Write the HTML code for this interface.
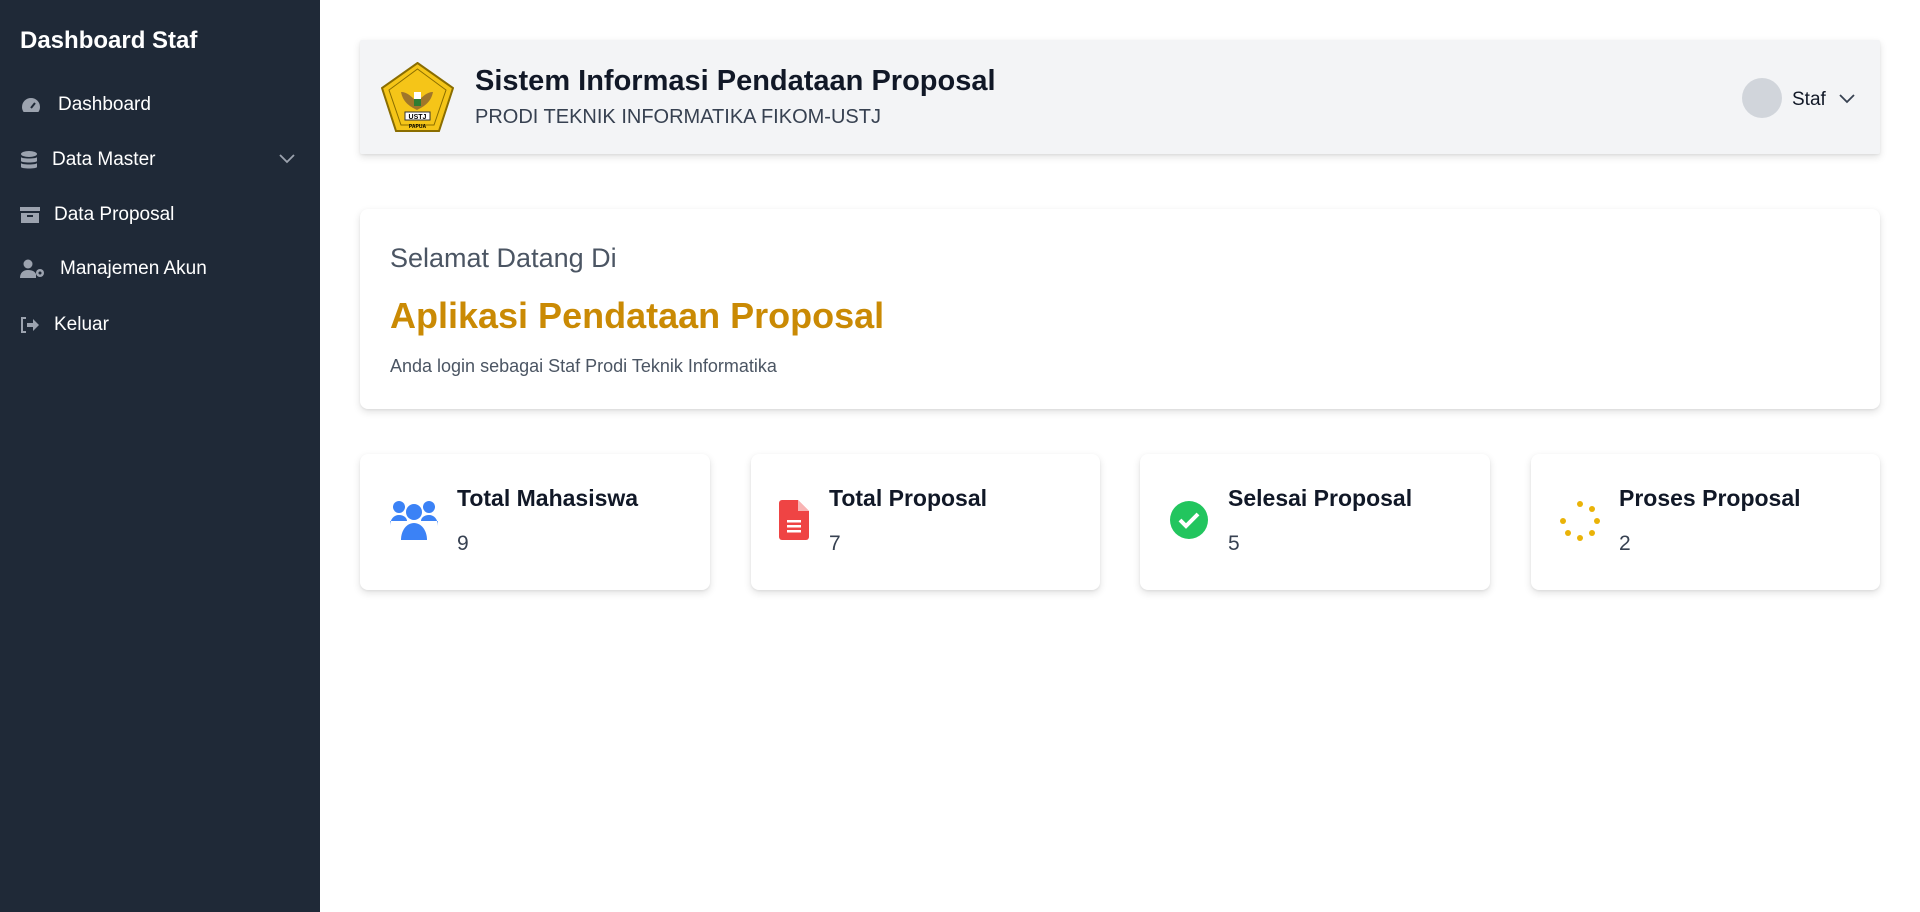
<!DOCTYPE html>
<html><head><meta charset="utf-8"><style>
*{box-sizing:border-box;margin:0;padding:0}
body{width:1920px;height:912px;font-family:"Liberation Sans",sans-serif;background:#fff;position:relative;overflow:hidden;color:#1f2937}
.sb{position:absolute;left:0;top:0;width:320px;height:912px;background:#1f2937;color:#fff}
.sb h1{position:absolute;left:20px;top:27px;font-size:24px;font-weight:bold}
.nav{position:absolute;left:20px;font-size:19px;display:flex;align-items:center}
.nav svg{margin-right:14px}
.card{position:absolute;background:#fff;border-radius:8px;box-shadow:0 3px 8px rgba(0,0,0,.12),0 1px 2px rgba(0,0,0,.06)}
.hdr{left:360px;top:40px;width:1520px;height:114px;background:#f3f4f6;border-radius:2px}
.stat h3{position:absolute;top:31px;font-size:23px;font-weight:bold;color:#111827}
.stat p{position:absolute;top:78px;font-size:21px;color:#374151}
</style></head><body>
<div class="sb">
<h1>Dashboard Staf</h1>
<div class="nav" style="top:94px"><svg width="22" height="20" viewBox="0 0 22 20"><path d="M11 3a9 9 0 0 0-9 9c0 2 .6 3.6 1.6 5h14.8c1-1.4 1.6-3 1.6-5a9 9 0 0 0-9-9z" fill="#9ca3af"/><path d="M11 13l4-5" stroke="#1f2937" stroke-width="2"/></svg><span style="margin-left:2px">Dashboard</span></div>
<div class="nav" style="top:149px"><svg width="18" height="20" viewBox="0 0 18 20"><ellipse cx="9" cy="4" rx="8" ry="3" fill="#9ca3af"/><path d="M1 7c0 2 16 2 16 0v4c0 2-16 2-16 0zM1 13c0 2 16 2 16 0v4c0 2-16 2-16 0z" fill="#9ca3af"/></svg>Data Master</div>
<svg style="position:absolute;left:278px;top:153px" width="18" height="12" viewBox="0 0 18 12"><path d="M2 2l7 7 7-7" stroke="#9ca3af" stroke-width="1.8" fill="none"/></svg>
<div class="nav" style="top:204px"><svg width="20" height="18" viewBox="0 0 20 18"><rect x="0" y="1" width="20" height="4" fill="#9ca3af"/><path d="M1 7h18v10H1z" fill="#9ca3af"/><rect x="7" y="9" width="6" height="2" fill="#1f2937"/></svg>Data Proposal</div>
<div class="nav" style="top:258px"><svg width="26" height="20" viewBox="0 0 26 20"><circle cx="8" cy="5" r="4.5" fill="#9ca3af"/><path d="M0 19c0-5 3-8 8-8s7 2 8 4v4z" fill="#9ca3af"/><circle cx="20" cy="14" r="4" fill="#9ca3af"/><circle cx="20" cy="14" r="1.5" fill="#1f2937"/></svg>Manajemen Akun</div>
<div class="nav" style="top:314px"><svg width="20" height="18" viewBox="0 0 20 18"><path d="M6 2H2v14h4" stroke="#9ca3af" stroke-width="2" fill="none"/><path d="M7 7h6V3l6 6-6 6v-4H7z" fill="#9ca3af"/></svg>Keluar</div>
</div>

<div class="card hdr">
<svg style="position:absolute;left:21px;top:22px" width="73" height="70" viewBox="0 0 73 70"><path d="M36.5 1L72 26 58 69H15L1 26z" fill="#f5c518" stroke="#8a6d00" stroke-width="2"/><path d="M36.5 7L65 28 53 63H20L8 28z" fill="none" stroke="#8a6d00" stroke-width="1"/><path d="M20 30c6 0 10 4 16 10 6-6 10-10 16-10-2 10-8 14-16 18-8-4-14-8-16-18z" fill="#a0762a"/><rect x="33" y="30" width="7" height="14" fill="#fff"/><rect x="33" y="37" width="7" height="7" fill="#2e7d32"/><rect x="24" y="50" width="25" height="8" fill="#fff" stroke="#333"/><text x="36.5" y="57" font-size="7" font-weight="bold" text-anchor="middle" font-family="Liberation Sans">USTJ</text><text x="36.5" y="66" font-size="5" font-weight="bold" text-anchor="middle" font-family="Liberation Sans">PAPUA</text></svg>
<div style="position:absolute;left:115px;top:25px;font-size:29px;font-weight:bold;color:#111827">Sistem Informasi Pendataan Proposal</div>
<div style="position:absolute;left:115px;top:66px;font-size:20px;color:#374151">PRODI TEKNIK INFORMATIKA FIKOM-USTJ</div>
<div style="position:absolute;left:1382px;top:38px;width:40px;height:40px;border-radius:50%;background:#d1d5db"></div>
<div style="position:absolute;left:1432px;top:49px;font-size:19px;color:#111827">Staf</div>
<svg style="position:absolute;left:1478px;top:53px" width="18" height="12" viewBox="0 0 18 12"><path d="M2 2l7 7 7-7" stroke="#374151" stroke-width="1.8" fill="none"/></svg>
</div>

<div class="card" style="left:360px;top:209px;width:1520px;height:200px">
<div style="position:absolute;left:30px;top:34px;font-size:27px;color:#4b5563">Selamat Datang Di</div>
<div style="position:absolute;left:30px;top:86px;font-size:36px;font-weight:bold;color:#ca8a04">Aplikasi Pendataan Proposal</div>
<div style="position:absolute;left:30px;top:147px;font-size:18px;color:#4b5563">Anda login sebagai Staf Prodi Teknik Informatika</div>
</div>

<div class="card stat" style="left:360px;top:454px;width:350px;height:136px">
<svg style="position:absolute;left:30px;top:44px" width="48" height="42" viewBox="0 0 48 42"><circle cx="9" cy="9" r="6" fill="#3b82f6"/><circle cx="39" cy="9" r="6" fill="#3b82f6"/><circle cx="24" cy="14" r="8" fill="#3b82f6"/><path d="M0 28c0-7 4-11 9-11s8 3 8 6H0z" fill="#3b82f6"/><path d="M48 28c0-7-4-11-9-11s-8 3-8 6h17z" fill="#3b82f6"/><path d="M11 42c0-10 6-17 13-17s13 7 13 17z" fill="#3b82f6"/></svg>
<h3 style="left:97px">Total Mahasiswa</h3><p style="left:97px">9</p></div>
<div class="card stat" style="left:751px;top:454px;width:349px;height:136px">
<svg style="position:absolute;left:28px;top:46px" width="30" height="40" viewBox="0 0 30 40"><path d="M3 0h16l11 11v26a3 3 0 0 1-3 3H3a3 3 0 0 1-3-3V3a3 3 0 0 1 3-3z" fill="#ef4444"/><path d="M19 0v11h11z" fill="#fff" opacity=".6"/><rect x="8" y="20" width="14" height="2.5" fill="#fff"/><rect x="8" y="25" width="14" height="2.5" fill="#fff"/><rect x="8" y="30" width="14" height="2.5" fill="#fff"/></svg>
<h3 style="left:78px">Total Proposal</h3><p style="left:78px">7</p></div>
<div class="card stat" style="left:1140px;top:454px;width:350px;height:136px">
<svg style="position:absolute;left:30px;top:47px" width="38" height="38" viewBox="0 0 38 38"><circle cx="19" cy="19" r="19" fill="#22c55e"/><path d="M10 19l6 6 12-12" stroke="#fff" stroke-width="4" fill="none"/></svg>
<h3 style="left:88px">Selesai Proposal</h3><p style="left:88px">5</p></div>
<div class="card stat" style="left:1531px;top:454px;width:349px;height:136px">
<svg style="position:absolute;left:28px;top:46px" width="42" height="42" viewBox="0 0 42 42" fill="#eab308"><circle cx="21" cy="4" r="3"/><circle cx="33" cy="9" r="3"/><circle cx="38" cy="21" r="3"/><circle cx="33" cy="33" r="3"/><circle cx="21" cy="38" r="3"/><circle cx="9" cy="33" r="3"/><circle cx="4" cy="21" r="3"/></svg>
<h3 style="left:88px">Proses Proposal</h3><p style="left:88px">2</p></div>
</body></html>
